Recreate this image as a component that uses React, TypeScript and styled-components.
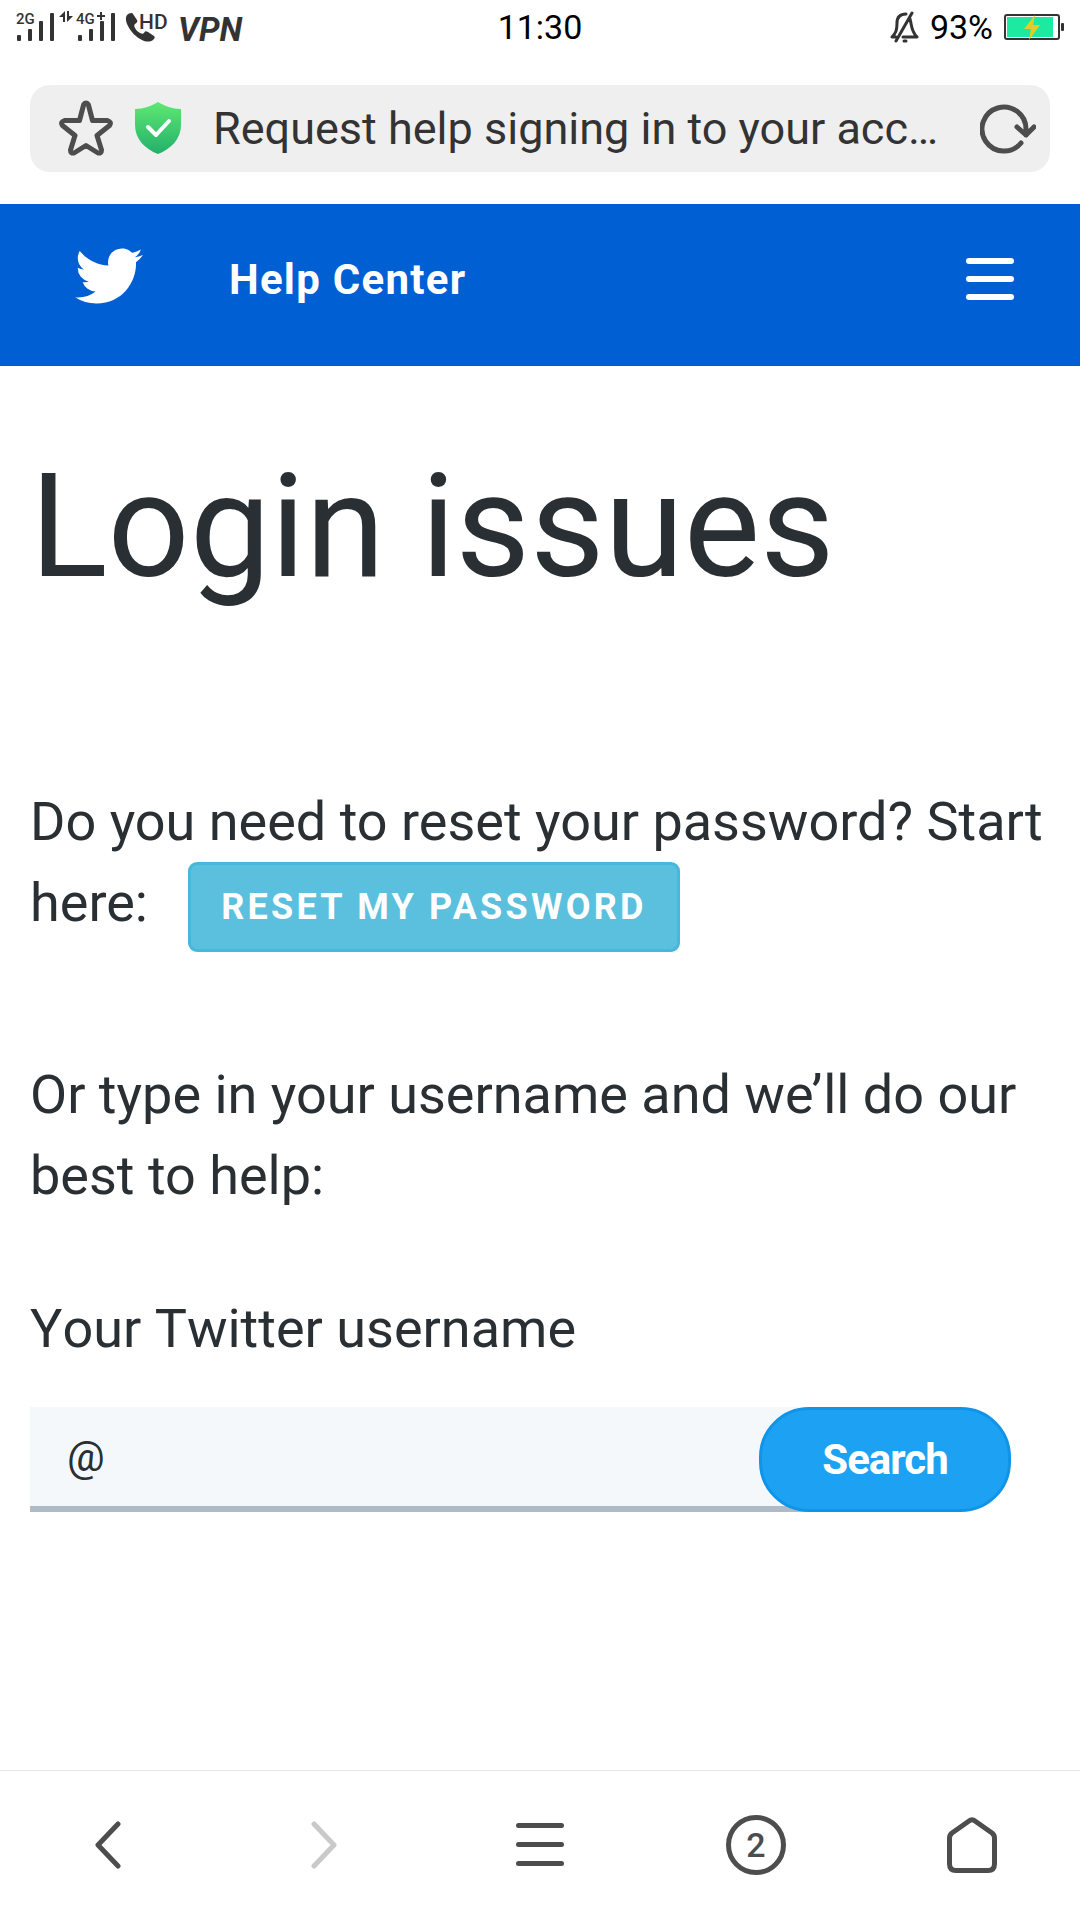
import React from "react";
import styled, { createGlobalStyle } from "styled-components";

const GlobalStyle = createGlobalStyle`
  *, *::before, *::after { box-sizing: border-box; }
  body {
    margin: 0;
    background: #fff;
    color: #292f33;
    font-family: Roboto, "Noto Sans", sans-serif;
  }
  button, input { font-family: inherit; }
  svg { display: block; flex: none; }
`;

const Screen = styled.div`
  display: flex;
  flex-direction: column;
  min-height: 100vh;
`;

const StatusBar = styled.div`
  display: grid;
  grid-template-columns: 1fr auto 1fr;
  align-items: center;
  height: 54px;
  padding: 0 16px;
  font-size: 34px;
  color: #000;
`;

const StatusEnd = styled.div`
  display: flex;
  align-items: center;
  justify-content: flex-end;
  gap: 11px;
`;

const AddressRow = styled.div`
  padding: 31px 30px 32px;
`;

const AddressBar = styled.div`
  display: flex;
  align-items: center;
  height: 87px;
  padding: 0 14px 0 29px;
  border-radius: 20px;
  background: #efefef;
`;

const AddressTitle = styled.div`
  flex: 1;
  min-width: 0;
  margin: 0 32px;
  overflow: hidden;
  white-space: nowrap;
  text-overflow: ellipsis;
  font-size: 45px;
  line-height: 56px;
  color: #333;
`;

const IconButton = styled.button`
  display: flex;
  align-items: center;
  justify-content: center;
  padding: 0;
  border: 0;
  background: none;
  color: inherit;
  cursor: pointer;
`;

const AddressIcons = styled.div`
  display: flex;
  gap: 22px;
  padding-bottom: 2px;
`;

const SiteHeader = styled.header`
  display: flex;
  align-items: center;
  height: 162px;
  padding: 0 66px 12px 75px;
  background: #0060d3;
  color: #fff;
`;

const LogoLink = styled.a`
  padding-bottom: 6px;
  color: #fff;
`;

const SiteName = styled.a`
  flex: 1;
  margin-left: 86px;
  color: #fff;
  font-size: 42px;
  font-weight: 700;
  letter-spacing: 0.03em;
  text-decoration: none;
`;

const Main = styled.main`
  flex: 1;
  padding: 71px 30px 0;
`;

const Title = styled.h1`
  margin: 0 0 164px;
  font-size: 144px;
  font-weight: 400;
  line-height: 180px;
`;

const Paragraph = styled.p<{ $gap: number }>`
  margin: 0 0 ${({ $gap }) => $gap}px;
  font-size: 54px;
  line-height: 81px;
`;

const ResetButton = styled.button`
  height: 90px;
  margin-left: 27px;
  padding: 0 30px;
  border: 3px solid #46b8da;
  border-radius: 9px;
  background: #5bc0de;
  color: #fff;
  font-size: 36px;
  font-weight: 700;
  letter-spacing: 0.09em;
  vertical-align: middle;
  cursor: pointer;
`;

const Form = styled.form`
  padding-right: 39px;
`;

const Label = styled.label`
  display: block;
  margin-bottom: 38px;
  font-size: 54px;
  line-height: 81px;
  font-kerning: none;
`;

const SearchRow = styled.div`
  display: flex;
`;

const UsernameInput = styled.input`
  flex: 1;
  min-width: 0;
  height: 105px;
  margin-right: -50px;
  padding: 0 60px 0 37px;
  border: 0;
  border-bottom: 6px solid #aebbc7;
  border-radius: 0;
  outline: 0;
  background: #f5f8fb;
  color: #292f33;
  font-size: 42px;
`;

const SearchButton = styled.button`
  position: relative;
  width: 252px;
  height: 105px;
  border: 3px solid #1094e8;
  border-radius: 50px;
  background: #1da1f2;
  color: #fff;
  font-size: 42px;
  font-weight: 700;
  letter-spacing: -1px;
  cursor: pointer;
`;

const BrowserNav = styled.nav`
  display: grid;
  grid-template-columns: repeat(5, 1fr);
  height: 150px;
  padding-bottom: 2px;
  border-top: 1px solid #e5e5e5;
  color: #4d4d4d;
`;

const TabCount = styled.span`
  display: flex;
  align-items: center;
  justify-content: center;
  width: 60px;
  height: 60px;
  border: 5px solid currentColor;
  border-radius: 50%;
  font-size: 34px;
  font-weight: 500;
`;

const line = {
  fill: "none",
  stroke: "currentColor",
  strokeLinecap: "round",
  strokeLinejoin: "round",
} as const;

function SignalStatus() {
  return (
    <svg width="240" height="52" viewBox="16 1 240 52" fill="#333" fontWeight="500">
      <text x="16" y="24" fontSize="15">2G</text>
      <rect x="17" y="35" width="4" height="6" rx="1" />
      <rect x="28" y="29" width="4" height="12" rx="1" />
      <rect x="39" y="21" width="4" height="20" rx="1" />
      <rect x="50" y="13" width="4" height="28" rx="1" />
      <path d="M65 11v11h-2v-5h-4zM67 22V11h2v5h4z" />
      <text x="76" y="24" fontSize="15">4G</text>
      <path d="M97 16h8M101 12v8" stroke="#333" strokeWidth="2" />
      <rect x="78" y="35" width="4" height="6" rx="1" />
      <rect x="89" y="29" width="4" height="12" rx="1" />
      <rect x="100" y="21" width="4" height="20" rx="1" />
      <rect x="111" y="13" width="4" height="28" rx="1" />
      <path d="M127 15c2-2 5-3 6-1l4 6c1 1 0 3-2 4-1 1-1 2 0 4 1 2 3 4 5 5 2 1 3 1 4 0 1-2 2-2 4-1l6 4c1 1 1 2-1 4-3 2-7 2-11 0-6-3-11-8-14-14-2-4-3-8-1-11z" />
      <text x="139" y="29" fontSize="21" fontWeight="500">HD</text>
      <text x="178" y="41" fontSize="33" fontWeight="700" fontStyle="italic">VPN</text>
    </svg>
  );
}

function MutedBellIcon() {
  return (
    <svg width="29" height="32" viewBox="0 0 29 32" {...line} stroke="#333" strokeWidth="3">
      <path d="M16 3c-7 0-9 4-9 9 0 7-1 10-5 14h4M20 8c2 7 1 12 7 18H13M6 30 22 2" />
      <path d="M14 30h2" />
    </svg>
  );
}

function BatteryIcon() {
  return (
    <svg width="60" height="28" viewBox="0 0 60 28">
      <rect x="1" y="2" width="54" height="24" rx="2" fill="#fff" stroke="#333" strokeWidth="2" />
      <rect x="3" y="4" width="46" height="20" fill="#1beaa0" />
      <path d="M31 2 20 16h7l-2 11 11-15h-7z" fill="#e6cb27" />
      <rect x="57" y="10" width="3" height="8" rx="1" fill="#333" />
    </svg>
  );
}

function StarIcon() {
  return (
    <svg width="54" height="56" viewBox="0 0 54 56" {...line} stroke="#4d4d4d" strokeWidth="5">
      <path d="M24.700 4.500Q27 1.500 29.300 4.500L33.500 20.500H48.500Q53 22 50.500 25.500L38 35.500 42.500 50Q42.500 53.500 39 53L27 45.500 15 53Q11.500 53.500 11.500 50L16 35.500 3.500 25.500Q1 22 5.500 20.500H20.500Z" />
    </svg>
  );
}

function ShieldIcon() {
  return (
    <svg width="46" height="52" viewBox="0 0 46 52">
      <defs>
        <linearGradient id="shield" x1="0" y1="0" x2="0" y2="1">
          <stop offset="0" stopColor="#5fe873" />
          <stop offset="1" stopColor="#22b06b" />
        </linearGradient>
      </defs>
      <path d="M23 0c7 4 14 7 23 7v16c0 14-10 24-23 29C10 47 0 37 0 23V7c9 0 16-3 23-7z" fill="url(#shield)" />
      <path d="m13 25 8 8 13-14" {...line} stroke="#fff" strokeWidth="4" />
    </svg>
  );
}

function ReloadIcon() {
  return (
    <svg width="56" height="50" viewBox="0 0 56 50" {...line} stroke="#4d4d4d" strokeWidth="5">
      <path d="M41 39A22 22 0 1 1 46 25V31M37 23l9 8 8-8" />
    </svg>
  );
}

function TwitterLogo() {
  return (
    <svg width="68" height="56" viewBox="0 2.100 24 19.800" fill="currentColor" role="img" aria-label="Twitter">
      <path d="M23.953 4.570a10 10 0 01-2.825.775 4.958 4.958 0 002.163-2.723c-.951.555-2.005.959-3.127 1.184a4.920 4.920 0 00-8.384 4.482C7.690 8.095 4.067 6.130 1.640 3.162a4.822 4.822 0 00-.666 2.475c0 1.710.870 3.213 2.188 4.096a4.904 4.904 0 01-2.228-.616v.060a4.923 4.923 0 003.946 4.827 4.996 4.996 0 01-2.212.085 4.936 4.936 0 004.604 3.417 9.867 9.867 0 01-6.102 2.105c-.390 0-.779-.023-1.170-.067a13.995 13.995 0 007.557 2.209c9.053 0 13.998-7.496 13.998-13.985 0-.210 0-.420-.015-.630A9.935 9.935 0 0024 4.590z" />
    </svg>
  );
}

function MenuIcon({ weight, gap }: { weight: number; gap: number }) {
  const inset = weight / 2;
  const height = gap * 2 + weight;
  return (
    <svg width="48" height={height} viewBox={`0 0 48 ${height}`} {...line} strokeWidth={weight}>
      {[0, 1, 2].map((row) => (
        <path key={row} d={`M${inset} ${inset + row * gap}H${48 - inset}`} />
      ))}
    </svg>
  );
}

function ChevronIcon({ forward = false }: { forward?: boolean }) {
  return (
    <svg width="28" height="48" viewBox="0 0 28 48" {...line} strokeWidth="5" stroke={forward ? "#c9c9c9" : "#4d4d4d"}>
      <path d={forward ? "M4 3 24 24 4 45" : "M24 3 4 24 24 45"} />
    </svg>
  );
}

function HomeIcon() {
  return (
    <svg width="50" height="56" viewBox="0 0 50 56" {...line} strokeWidth="5">
      <path d="M22 4Q25 1.500 28 4L45 16Q47.500 18 47.500 21V47Q47.500 53.500 41 53.500H9Q2.500 53.500 2.500 47V21Q2.500 18 5 16Z" />
    </svg>
  );
}

export default function App() {
  return (
    <Screen>
      <GlobalStyle />
      <StatusBar>
        <SignalStatus />
        <span>11:30</span>
        <StatusEnd>
          <MutedBellIcon />
          <span>93%</span>
          <BatteryIcon />
        </StatusEnd>
      </StatusBar>

      <AddressRow>
        <AddressBar>
          <AddressIcons>
            <IconButton type="button" aria-label="Bookmark">
              <StarIcon />
            </IconButton>
            <IconButton type="button" aria-label="Site security">
              <ShieldIcon />
            </IconButton>
          </AddressIcons>
          <AddressTitle>Request help signing in to your acc…</AddressTitle>
          <IconButton type="button" aria-label="Reload">
            <ReloadIcon />
          </IconButton>
        </AddressBar>
      </AddressRow>

      <SiteHeader>
        <LogoLink href="#twitter">
          <TwitterLogo />
        </LogoLink>
        <SiteName href="#help">Help Center</SiteName>
        <IconButton type="button" aria-label="Menu">
          <MenuIcon weight={6} gap={18} />
        </IconButton>
      </SiteHeader>

      <Main>
        <Title>Login issues</Title>
        <Paragraph $gap={102}>
          Do you need to reset your password? Start here:{" "}
          <ResetButton type="button">RESET MY PASSWORD</ResetButton>
        </Paragraph>
        <Paragraph $gap={72}>Or type in your username and we’ll do our best to help:</Paragraph>
        <Form onSubmit={(event) => event.preventDefault()}>
          <Label htmlFor="username">Your Twitter username</Label>
          <SearchRow>
            <UsernameInput id="username" defaultValue="@" />
            <SearchButton type="submit">Search</SearchButton>
          </SearchRow>
        </Form>
      </Main>

      <BrowserNav>
        <IconButton type="button" aria-label="Back">
          <ChevronIcon />
        </IconButton>
        <IconButton type="button" aria-label="Forward">
          <ChevronIcon forward />
        </IconButton>
        <IconButton type="button" aria-label="Browser menu">
          <MenuIcon weight={5} gap={19} />
        </IconButton>
        <IconButton type="button" aria-label="Open tabs">
          <TabCount>2</TabCount>
        </IconButton>
        <IconButton type="button" aria-label="Home">
          <HomeIcon />
        </IconButton>
      </BrowserNav>
    </Screen>
  );
}
